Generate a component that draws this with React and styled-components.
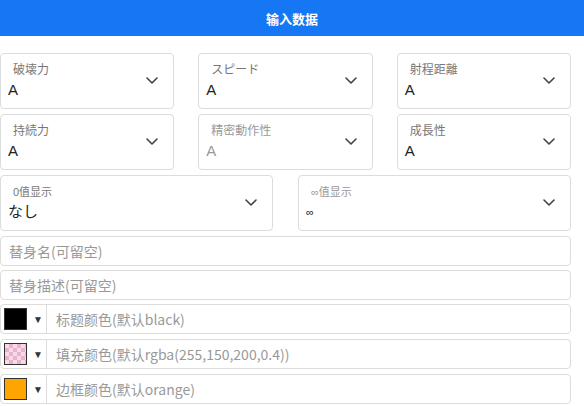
import React from "react";
import styled, { createGlobalStyle } from "styled-components";

const GlobalStyle = createGlobalStyle`
  body {
    margin: 0;
    background: #fff;
    font-family: "Liberation Sans", "Noto Sans CJK SC", sans-serif;
  }
`;

const Page = styled.div`
  width: 571px;
`;

const Header = styled.div`
  height: 36px;
  background-color: #1677f5;
  color: #fff;
  font-size: 13px;
  font-weight: bold;
  display: flex;
  align-items: center;
  justify-content: center;
  width: 584px;
  margin-bottom: 17px;
`;

const Grid = styled.div`
  display: grid;
  grid-template-columns: repeat(${(props) => props.cols}, 1fr);
  column-gap: ${(props) => props.gap}px;
  margin-bottom: 5px;
`;

const SelectBox = styled.div`
  position: relative;
  height: 56px;
  box-sizing: border-box;
  border: 1px solid #dcdcdc;
  border-radius: 4px;
  display: flex;
  flex-direction: column;
  justify-content: center;
  padding: 0 0 2px 7px;
`;

const Label = styled.div`
  font-size: ${(props) => (props.small ? 11 : 12)}px;
  color: ${(props) => (props.disabled ? "#999" : "#777")};
  padding-left: 5px;
  line-height: 16px;
  margin-bottom: 3px;
`;

const Value = styled.div`
  font-size: ${(props) => (props.tiny ? 11 : 15)}px;
  color: ${(props) => (props.disabled ? "#999" : "#222")};
  line-height: 18px;
`;

const Chevron = styled.svg`
  position: absolute;
  right: 15px;
  top: 50%;
  margin-top: -4px;
  width: 12px;
  height: 8px;
`;

const TextInput = styled.div`
  height: 30px;
  box-sizing: border-box;
  border: 1px solid #dcdcdc;
  border-radius: 4px;
  display: flex;
  align-items: center;
  padding-left: 8px;
  font-size: 14px;
  color: #999;
  font-family: "Noto Sans CJK SC", sans-serif;
  margin-bottom: 4px;
`;

const ColorRow = styled.div`
  height: 30px;
  box-sizing: border-box;
  border: 1px solid #dcdcdc;
  border-radius: 4px;
  display: flex;
  align-items: stretch;
  margin-bottom: 5px;
`;

const Picker = styled.div`
  width: 46px;
  display: flex;
  align-items: center;
  padding-left: 3px;
  box-sizing: border-box;
  border-right: 1px solid #dcdcdc;
`;

const Swatch = styled.div`
  width: 23px;
  height: 22px;
  box-sizing: border-box;
  border: 1px solid #333;
  background: ${(props) => props.bg};
  background-size: 8px 8px;
`;

const Arrow = styled.span`
  font-size: 10px;
  color: #333;
  margin-left: 6px;
`;

const Placeholder = styled.div`
  display: flex;
  align-items: center;
  padding-left: 9px;
  font-size: 14px;
  color: #999;
  font-family: "Noto Sans CJK SC", sans-serif;
`;

const Select = ({ label, value, disabled, tiny, small }) => (
  <SelectBox>
    <Label disabled={disabled} small={small}>
      {label}
    </Label>
    <Value disabled={disabled && !tiny} tiny={tiny}>
      {value}
    </Value>
    <Chevron viewBox="0 0 12 8">
      <polyline
        points="1,1 6,6 11,1"
        fill="none"
        stroke="#444"
        strokeWidth="1.6"
        strokeLinecap="round"
        strokeLinejoin="round"
      />
    </Chevron>
  </SelectBox>
);

const pinkChecker =
  "linear-gradient(rgba(255,150,200,0.4), rgba(255,150,200,0.4)), conic-gradient(#ccc 25%, #fff 0 50%, #ccc 0 75%, #fff 0)";

const colorData = [
  { bg: "#000", text: "标题颜色(默认black)" },
  { bg: pinkChecker, text: "填充颜色(默认rgba(255,150,200,0.4))" },
  { bg: "orange", text: "边框颜色(默认orange)" },
];

const App = () => {
  return (
    <>
      <GlobalStyle />
      <Page>
        <Header>输入数据</Header>
        <Grid cols={3} gap={24}>
          <Select label="破壊力" value="A" />
          <Select label="スピード" value="A" />
          <Select label="射程距離" value="A" />
        </Grid>
        <Grid cols={3} gap={24}>
          <Select label="持続力" value="A" />
          <Select label="精密動作性" value="A" disabled />
          <Select label="成長性" value="A" />
        </Grid>
        <Grid cols={2} gap={25}>
          <Select label="0值显示" value="なし" small />
          <Select label="∞值显示" value="∞" disabled tiny small />
        </Grid>
        <TextInput>替身名(可留空)</TextInput>
        <TextInput>替身描述(可留空)</TextInput>
        {colorData.map((c) => (
          <ColorRow key={c.text}>
            <Picker>
              <Swatch bg={c.bg} />
              <Arrow>▼</Arrow>
            </Picker>
            <Placeholder>{c.text}</Placeholder>
          </ColorRow>
        ))}
      </Page>
    </>
  );
};

export default App;
